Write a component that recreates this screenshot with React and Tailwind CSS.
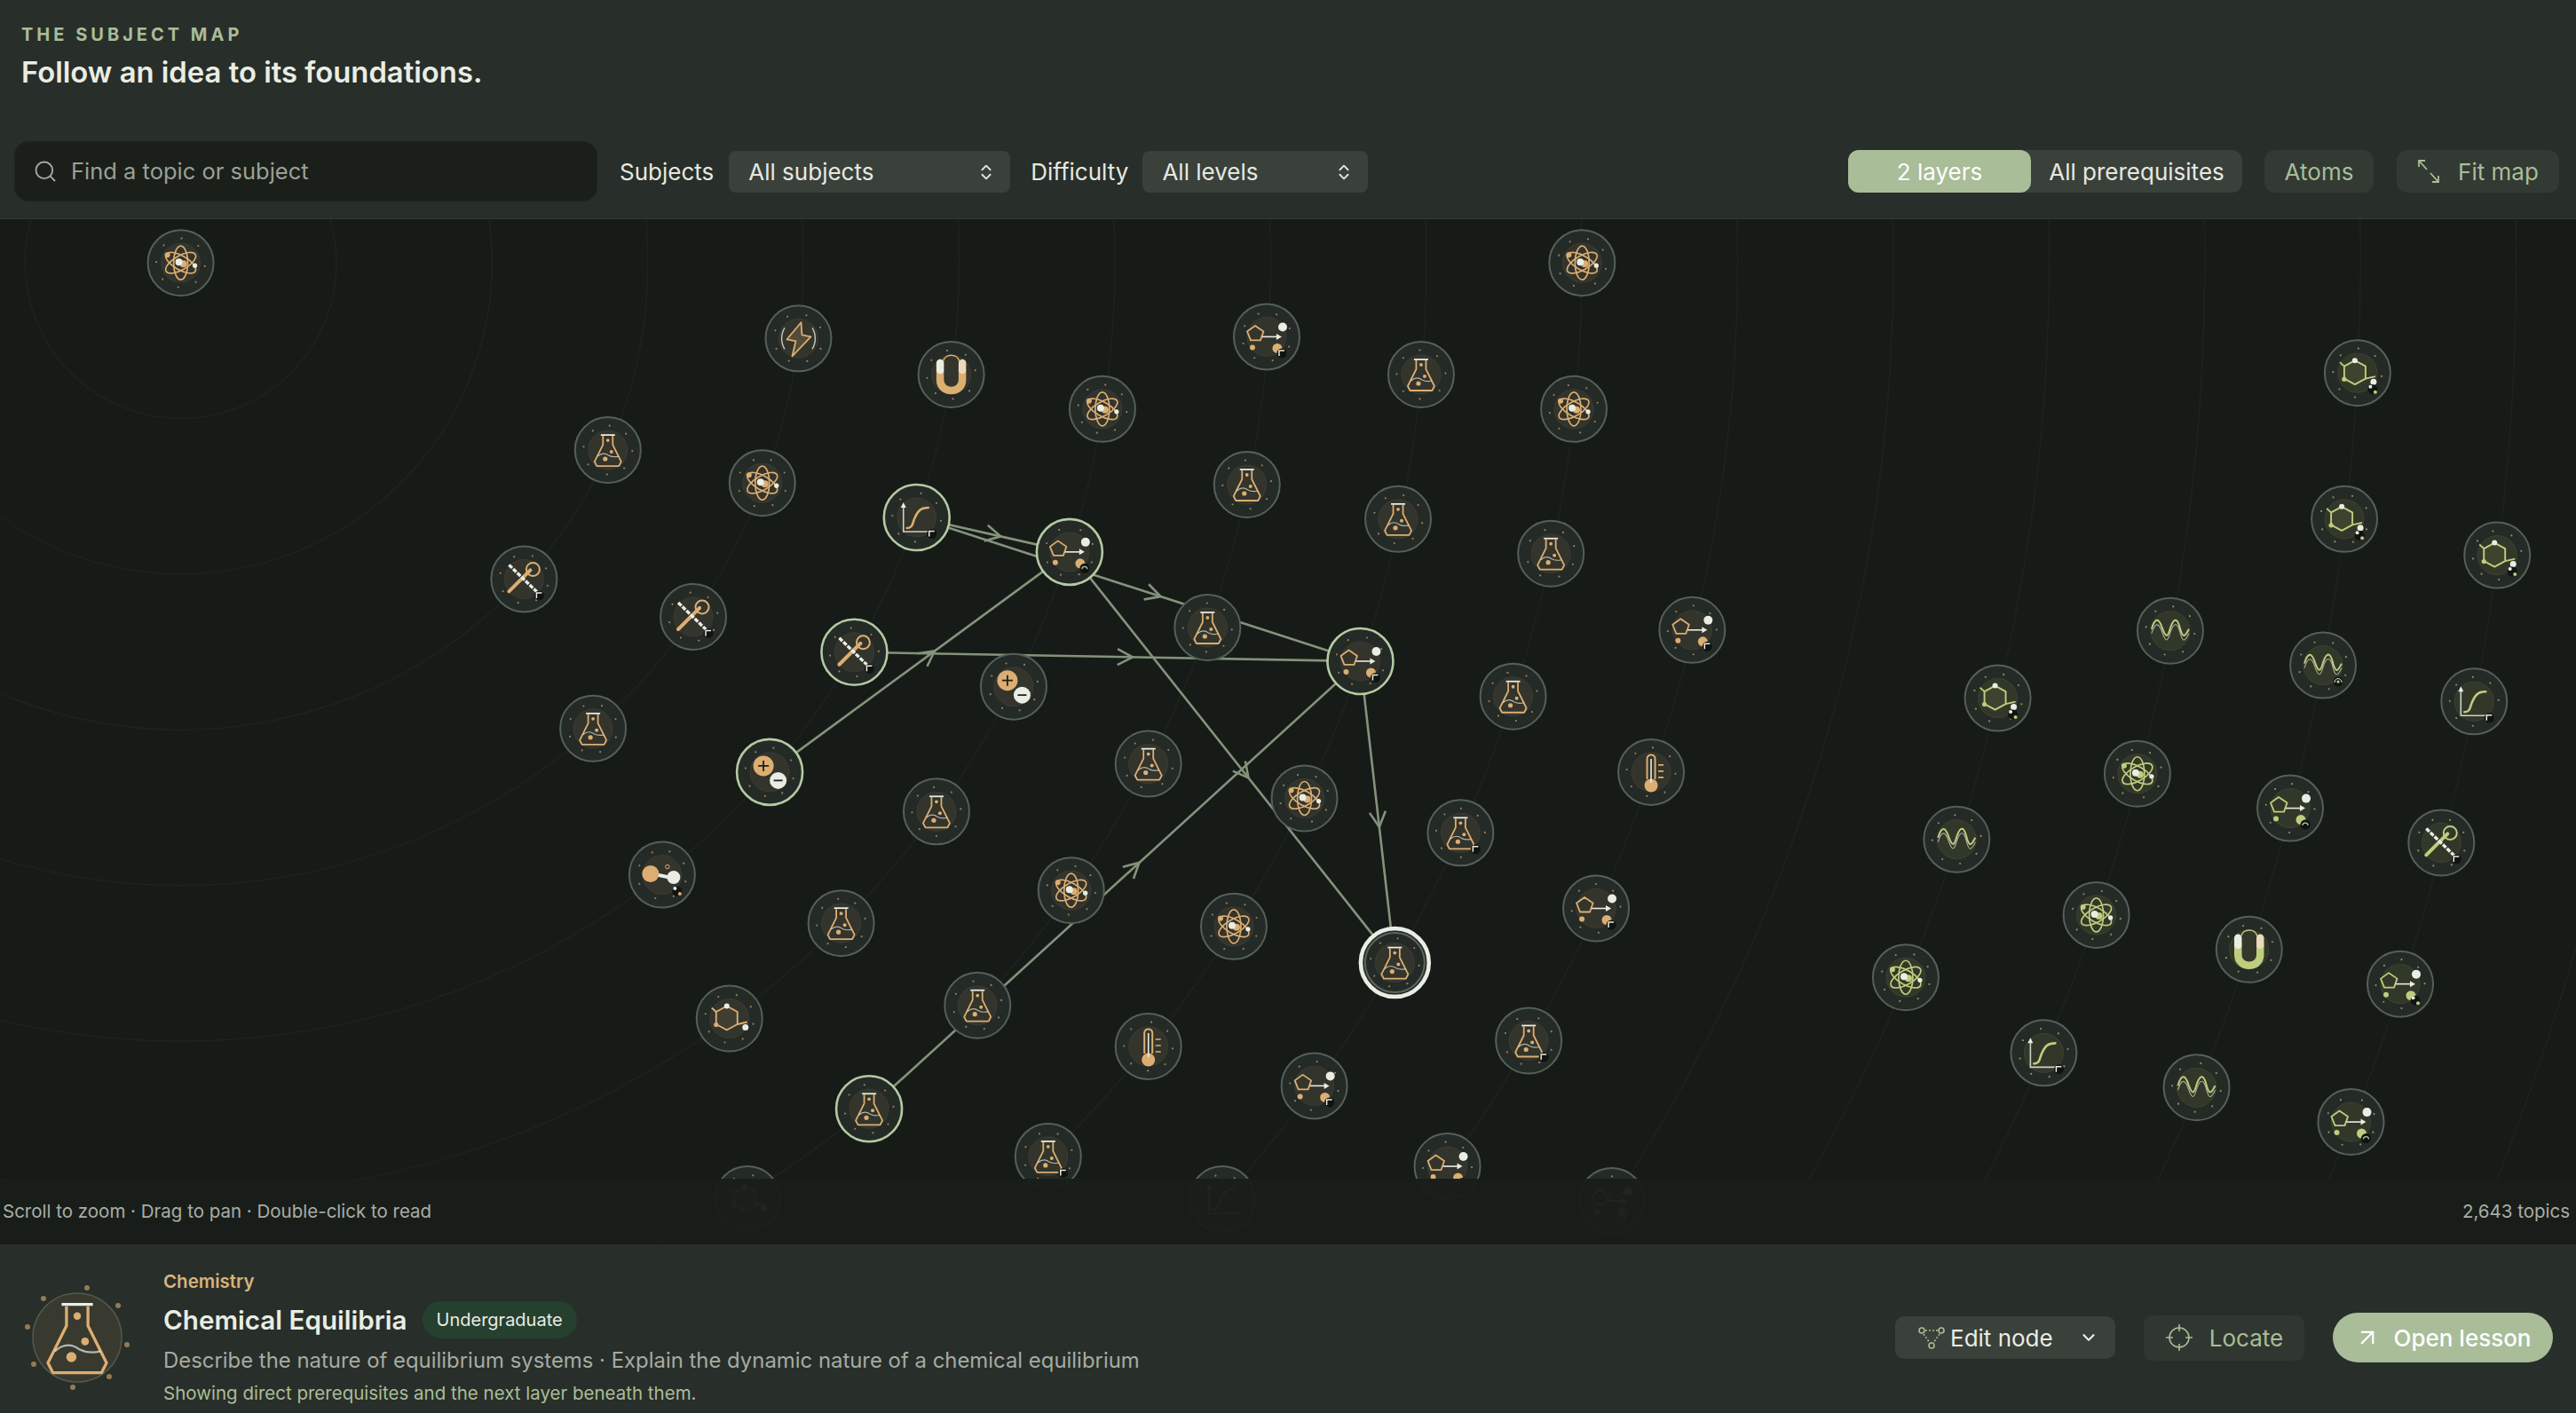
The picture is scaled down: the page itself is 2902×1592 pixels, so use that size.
import React from 'react';
import { ArrowUpRight, ChevronDown, ChevronsUpDown, Search } from 'lucide-react';

const TAN = '#dcae72';
const GREEN = '#bfcd7e';
const WHITE = '#e9ede3';
const SCALE = 1.8508;
const RING_CENTER = [203.6, 296];

// positions are in the 1568-wide sketch coordinates, scaled at render time
const chemistry = [
  [110, 160, 'atom'], [486, 206, 'bolt'], [579, 228, 'magnet'], [671, 249, 'atom'], [771, 205, 'reaction', 'corner'],
  [865, 228, 'flask'], [963, 160, 'atom'], [958, 249, 'atom'], [370, 274, 'flask'], [464, 294, 'atom'],
  [759, 295, 'flask'], [851, 316, 'flask'], [944, 337, 'flask'], [1030, 383.5, 'reaction', 'corner'], [319, 352.5, 'tools', 'corner'],
  [422, 375.5, 'tools', 'corner'], [558, 315, 'curve', 'corner', true], [651, 336, 'reaction', 'swirl', true], [520, 397, 'tools', 'corner', true],
  [468.5, 470, 'plusminus', null, true], [617, 418, 'plusminus'], [735, 382, 'flask'], [828, 402.5, 'reaction', 'corner', true], [921, 424, 'flask'],
  [1005, 470, 'thermo'], [361, 443.5, 'flask'], [570, 494, 'flask'], [699, 465, 'flask'], [794, 486, 'atom'],
  [889, 507, 'flask', 'corner'], [403, 532.5, 'dumbbell', 'bond'], [512, 562, 'flask'], [652, 542, 'atom'], [751, 564, 'atom'],
  [971.5, 553, 'reaction', 'corner'], [444, 620, 'hexagon'], [595, 612, 'flask'], [699, 637, 'thermo'], [930.5, 633.5, 'flask', 'corner'],
  [529, 675, 'flask', null, true], [800, 661, 'reaction', 'corner'], [638, 704, 'flask', 'corner'], [881, 710, 'reaction', 'corner'],
  [455, 730, 'hexagon'], [744, 730, 'curve', 'corner'], [981, 731, 'reaction', 'corner'],
];

const physics = [
  [1435, 227, 'hexagon', 'bond'], [1427, 316, 'hexagon', 'bond'], [1520, 338, 'hexagon', 'bond'], [1321, 384, 'wave'], [1414, 405, 'wave', 'target'],
  [1506, 427, 'curve', 'corner'], [1216, 425, 'hexagon', 'bond'], [1301, 471, 'atom'], [1394, 492, 'reaction', 'swirl'], [1486, 513, 'tools', 'corner'],
  [1191, 511, 'wave'], [1276, 557, 'atom'], [1369, 578, 'magnet'], [1461, 599, 'reaction', 'bond'], [1160, 595, 'atom'],
  [1244, 641, 'curve', 'corner'], [1337, 662, 'wave'], [1431, 683, 'reaction', 'swirl'],
];

const edges = [
  [[558, 315], [651, 336]],
  [[558, 315], [828, 402.5]],
  [[520, 397], [828, 402.5]],
  [[468.5, 470], [651, 336]],
  [[651, 336], [849, 586]],
  [[828, 402.5], [849, 586]],
  [[529, 675], [828, 402.5]],
];

const DOT_ANGLES = [8, 52, 96, 138, 182, 226, 272, 316];

const Flask = ({ c, sw = 1.8 }) => (
  <g fill="none">
    <path d="M-5.5 -16 V-6 L-15 13 L-12.5 18 H12.5 L15 13 L5.5 -6 V-16" stroke={c} strokeWidth={sw} strokeLinejoin="round" />
    <path d="M-8 -17 H8" stroke={WHITE} strokeWidth={sw} />
    <path d="M-11.5 7 C-7 3 -3 3 1 6 C5 8 8 8 12 7" stroke={WHITE} strokeOpacity=".7" strokeWidth={sw * 0.65} />
    <circle cx="0" cy="-11" r="1.9" fill={c} />
    <circle cx="4" cy="2" r="2" fill={c} />
    <circle cx="-3" cy="10" r="2.6" fill={c} />
  </g>
);

const Atom = ({ c }) => (
  <g fill="none">
    <ellipse rx="19" ry="8" transform="rotate(30)" stroke={c} strokeWidth="1.7" />
    <ellipse rx="19" ry="8" transform="rotate(90)" stroke={c} strokeWidth="1.7" />
    <ellipse rx="19" ry="8" transform="rotate(150)" stroke={c} strokeWidth="1.7" />
    <circle cx="-15" cy="-9" r="3" fill={c} />
    <circle cx="3" cy="1" r="4" fill={c} />
    <circle cx="-2" cy="-1" r="4" fill={WHITE} />
    <circle cx="16" cy="3" r="2.6" fill={WHITE} />
  </g>
);

const Reaction = ({ c }) => (
  <g>
    <path d="M-13 -12.5 L-3.5 -6 L-7 4 L-18 4 L-22 -6 Z" fill="none" stroke={c} strokeWidth="1.8" strokeLinejoin="round" />
    <path d="M-5 0 H13" stroke={WHITE} strokeWidth="1.6" />
    <path d="M11 -3.5 L17 0 L11 3.5 Z" fill={WHITE} />
    <circle cx="18" cy="-11" r="5" fill={WHITE} />
    <circle cx="12" cy="13" r="5.5" fill={c} />
    <circle cx="-16" cy="12" r="3" fill={c} />
  </g>
);

const Curve = ({ c }) => (
  <g fill="none">
    <path d="M-15 -15 V16 H18" stroke={WHITE} strokeOpacity=".85" strokeWidth="1.6" />
    <path d="M-18 -11 L-15 -17 L-12 -11 Z" fill={WHITE} />
    <path d="M-11 12 C-4 12 -5 6 -2 0 C1 -7 4 -11 13 -11" stroke={c} strokeWidth="2.6" strokeLinecap="round" />
  </g>
);

const Tools = ({ c }) => (
  <g fill="none">
    <path d="M-17 14 L7 -10" stroke={c} strokeWidth="4" strokeLinecap="round" />
    <circle cx="10" cy="-11" r="7.5" stroke={c} strokeWidth="2" />
    <path d="M-17 -16 L15 15" stroke={WHITE} strokeWidth="3.4" strokeDasharray="5 1.5" />
  </g>
);

const PlusMinus = ({ c }) => (
  <g>
    <circle cx="-7" cy="-7" r="11.5" fill={c} />
    <path d="M-13 -7 H-1 M-7 -13 V-1" stroke="#1c211d" strokeWidth="1.8" />
    <circle cx="9.5" cy="9.5" r="9.5" fill={WHITE} />
    <path d="M4.5 9.5 H14.5" stroke="#1c211d" strokeWidth="1.8" />
  </g>
);

const Bolt = ({ c }) => (
  <g fill="none">
    <path d="M3 -18 L-13 1 L-3 3 L-7 20 L14 -2 L4 -4 Z" fill={c} fillOpacity=".2" stroke={c} strokeWidth="1.8" strokeLinejoin="round" />
    <path d="M-15.5 -12 C-20 -5 -20 5 -15.5 12" stroke={WHITE} strokeOpacity=".8" strokeWidth="1.4" />
    <path d="M15.5 -12 C20 -5 20 5 15.5 12" stroke={WHITE} strokeOpacity=".8" strokeWidth="1.4" />
  </g>
);

const Magnet = ({ c }) => (
  <g fill="none">
    <path d="M-12.5 -5 V6 C-12.5 22 12.5 22 12.5 6 V-5" stroke={c} strokeWidth="8.5" />
    <path d="M-12.5 -5 V-13" stroke={WHITE} strokeWidth="8.5" strokeLinecap="round" />
    <path d="M12.5 -5 V-13" stroke="#ecd9b8" strokeWidth="8.5" strokeLinecap="round" />
    <path d="M-9 -15 C-7 -24 7 -24 9 -15" stroke={c} strokeWidth="1.4" />
  </g>
);

const Hexagon = ({ c }) => (
  <g fill="none">
    <path d="M-3 -14 L9 -7.5 L9 6.5 L-3 13 L-15 6.5 L-15 -7.5 Z" fill={c} fillOpacity=".08" stroke={c} strokeWidth="1.9" strokeLinejoin="round" />
    <path d="M-15 -7.5 L-20 -12 M9 6.5 L20 4" stroke={c} strokeWidth="1.9" />
    <circle cx="-3" cy="-14" r="3" fill={WHITE} />
    <circle cx="-15" cy="7" r="2.6" fill={c} />
    <circle cx="18" cy="10" r="3.5" fill={WHITE} />
  </g>
);

const Dumbbell = ({ c }) => (
  <g>
    <path d="M-6 0 L8 3" stroke={WHITE} strokeWidth="4" />
    <circle cx="-13" cy="-1" r="9.5" fill={c} />
    <circle cx="13" cy="3" r="7.5" fill={WHITE} />
    <circle cx="6" cy="-9" r="2.2" fill="none" stroke={c} strokeWidth="1" />
  </g>
);

const Thermo = ({ c }) => (
  <g fill="none">
    <path d="M-4.5 8 V-15 C-4.5 -21 4.5 -21 4.5 -15 V8" stroke={c} strokeWidth="2" />
    <circle cx="0" cy="15" r="7.5" fill={c} />
    <path d="M0 12 V-15" stroke={WHITE} strokeWidth="1.6" />
    <path d="M8 -8 H14 M8 -1 H14 M8 6 H14" stroke={c} strokeWidth="1.6" />
  </g>
);

const Wave = ({ c }) => (
  <g fill="none">
    <path d="M-21 -2 C-17 -15 -13 -15 -9 -3 C-5 8 -3 8 0 -3 C4 -15 8 -15 11 -3 C14 8 16 8 21 -2" stroke={c} strokeWidth="2" />
    <path d="M-21 3 C-17 -10 -13 -10 -9 2 C-5 13 -3 13 0 2 C4 -10 8 -10 11 2 C14 13 16 13 21 3" stroke={WHITE} strokeOpacity=".65" strokeWidth="1.1" />
  </g>
);

const ICONS = {
  flask: Flask, atom: Atom, reaction: Reaction, curve: Curve, tools: Tools, plusminus: PlusMinus,
  bolt: Bolt, magnet: Magnet, hexagon: Hexagon, dumbbell: Dumbbell, thermo: Thermo, wave: Wave,
};

const Badge = ({ type, c }) => {
  if (!type) return null;
  return (
    <g transform="translate(17 18.5)">
      <circle r="5.5" fill="#101411" />
      {type === 'corner' && <path d="M-3 3 V-3 H3" fill="none" stroke={WHITE} strokeWidth="1.5" />}
      {type === 'swirl' && <path d="M-3 1 C-3 -3 3 -3 3 1" fill="none" stroke={WHITE} strokeOpacity=".8" strokeWidth="1.3" />}
      {type === 'bond' && (
        <g>
          <circle cx="-2.5" cy="-3" r="2" fill={WHITE} />
          <circle cx="3" cy="3" r="2" fill={c} />
        </g>
      )}
      {type === 'target' && (
        <g>
          <circle r="1.6" fill={c} />
          <path d="M-4 1 C-4 -5 4 -5 4 1" fill="none" stroke={WHITE} strokeWidth="1" />
        </g>
      )}
    </g>
  );
};

const Node = ({ x, y, icon, badge, active, target, color, index }) => {
  const Icon = ICONS[icon];
  return (
    <g transform={`translate(${x * SCALE} ${y * SCALE})`}>
      <circle r="37" fill="#242a26" stroke={active ? '#b4caa3' : '#556058'} strokeWidth={active ? 2.6 : 2} />
      {target && <circle r="38.5" fill="none" stroke={WHITE} strokeWidth="4.5" />}
      {target && <circle r="33.5" fill="none" stroke="#5d665e" strokeWidth="2" />}
      <circle r="22" fill={color === TAN ? '#33342c' : '#323829'} stroke={color === TAN ? '#3c3c32' : '#3c4332'} strokeWidth="1" />
      {DOT_ANGLES.map((a) => {
        const rad = ((a + index * 17) * Math.PI) / 180;
        return <circle key={a} cx={Math.cos(rad) * 27.5} cy={Math.sin(rad) * 27.5} r="1.1" fill={color} fillOpacity=".65" />;
      })}
      <Icon c={color} />
      <Badge type={badge} c={color} />
    </g>
  );
};

const Edge = ({ from, to }) => {
  const x1 = from[0] * SCALE;
  const y1 = from[1] * SCALE;
  const x2 = to[0] * SCALE;
  const y2 = to[1] * SCALE;
  const mx = x1 + (x2 - x1) * 0.55;
  const my = y1 + (y2 - y1) * 0.55;
  const angle = (Math.atan2(y2 - y1, x2 - x1) * 180) / Math.PI;
  return (
    <g stroke="#84937c" strokeWidth="2.6" fill="none">
      <line x1={x1} y1={y1} x2={x2} y2={y2} />
      <path d="M-17 -9 L0 0 L-17 9" transform={`translate(${mx} ${my}) rotate(${angle})`} />
    </g>
  );
};

const SubjectGraph = () => (
  <svg className="absolute inset-0 w-full h-full" viewBox="0 247 2902 1155">
    {Array.from({ length: 24 }, (_, i) => (
      <circle key={i} cx={RING_CENTER[0]} cy={RING_CENTER[1]} r={(i + 1) * 175.4} fill="none" stroke="#ffffff" strokeOpacity=".035" strokeWidth="1.4" />
    ))}
    {edges.map((e, i) => <Edge key={i} from={e[0]} to={e[1]} />)}
    {chemistry.map((n, i) => (
      <Node key={i} index={i} x={n[0]} y={n[1]} icon={n[2]} badge={n[3]} active={n[4]} color={TAN} />
    ))}
    {physics.map((n, i) => (
      <Node key={i} index={i} x={n[0]} y={n[1]} icon={n[2]} badge={n[3]} color={GREEN} />
    ))}
    <Node index={3} x={849} y={586} icon="flask" target color={TAN} />
  </svg>
);

const FitIcon = () => (
  <svg width="26" height="28" viewBox="0 0 26 28" fill="none" stroke="#a8bd98" strokeWidth="1.8">
    <path d="M2 9 V2 H9 M2 2 L11 12" />
    <path d="M24 19 V26 H17 M24 26 L15 16" />
  </svg>
);

const CrosshairIcon = () => (
  <svg width="32" height="32" viewBox="0 0 32 32" fill="none" stroke="#a8bd98" strokeWidth="1.6">
    <circle cx="16" cy="16" r="11" />
    <path d="M16 1 V9 M16 23 V31 M1 16 H9 M23 16 H31" />
  </svg>
);

const EditNodeIcon = () => (
  <svg width="30" height="26" viewBox="0 0 30 26" fill="none" stroke="#a8bd98" strokeWidth="1.6">
    <circle cx="4" cy="5" r="3" />
    <circle cx="26" cy="5" r="3" />
    <circle cx="15" cy="22" r="3" />
    <path d="M8 5 H22 M6 9 L13 19 M24 9 L17 19" strokeDasharray="2 2" />
  </svg>
);

const FooterFlask = () => {
  const dots = [[98, 1451], [49, 1463], [133, 1471], [31, 1495], [143, 1515], [38, 1537], [123, 1551], [82, 1563]];
  return (
    <svg className="w-[160px] h-[130px] shrink-0" viewBox="10 1442 160 130">
      <circle cx="87" cy="1507" r="50" fill="#383a30" stroke="#55584a" strokeWidth="1.5" />
      {dots.map(([x, y]) => <circle key={x} cx={x} cy={y} r="3" fill={TAN} fillOpacity=".6" />)}
      <g transform="translate(87 1507) scale(2.2)">
        <Flask c={TAN} sw={1.5} />
      </g>
    </svg>
  );
};

const SelectBox = ({ label, width }) => (
  <button className={`h-[47px] ${width} flex items-center justify-between pl-[22px] pr-[16px] pt-[1px] bg-[#3a403a] rounded-[8px] text-[26px] text-[#e6e8e0]`}>
    {label}
    <ChevronsUpDown size={22} color="#e6e8e0" />
  </button>
);

export default function App() {
  return (
    <div className="w-[2902px] h-[1592px] flex flex-col overflow-hidden bg-[#161b17] [font-family:Inter,sans-serif]">
      <header className="h-[247px] shrink-0 bg-[#282e29] border-b border-[#323832]">
        <div className="pl-6 pt-[27px]">
          <div className="text-[20px] leading-6 font-bold tracking-[0.2em] text-[#a8bd98]">THE SUBJECT MAP</div>
          <h1 className="mt-[9px] text-[32.8px] leading-[42px] font-semibold text-[#e9ede3]">Follow an idea to its foundations.</h1>
        </div>
        <div className="mt-[57px] flex items-center pl-4 pr-[19px]">
          <div className="w-[657px] h-[68px] flex items-center gap-[15px] pl-[20px] bg-[#1a1f1a] rounded-[16px] border border-[#20251f]">
            <Search size={28} color="#a5aba2" strokeWidth={1.6} />
            <span className="text-[25.5px] text-[#9aa096]">Find a topic or subject</span>
          </div>
          <span className="ml-[25px] mr-[17px] text-[26px] text-[#e6e8e0]">Subjects</span>
          <SelectBox label="All subjects" width="w-[317px]" />
          <span className="ml-[23px] mr-[16px] text-[26px] text-[#e6e8e0]">Difficulty</span>
          <SelectBox label="All levels" width="w-[254px]" />
          <div className="ml-auto flex items-center">
            <div className="flex h-12 rounded-[12px] bg-[#3a403a]">
              <button className="w-[206px] rounded-[12px] bg-[#a8bd98] text-[26px] text-white">2 layers</button>
              <button className="w-[238px] text-[26px] text-[#e6e8e0]">All prerequisites</button>
            </div>
            <button className="ml-[25px] w-[123px] h-12 rounded-[12px] bg-[#333a33] text-[26px] text-[#a8bd98]">Atoms</button>
            <button className="ml-[26px] w-[183px] h-12 flex items-center justify-center gap-[20px] rounded-[12px] bg-[#333a33] text-[26px] text-[#a8bd98]">
              <FitIcon />
              Fit map
            </button>
          </div>
        </div>
      </header>

      <main className="relative flex-1 overflow-hidden">
        <SubjectGraph />
        <div className="absolute bottom-0 inset-x-0 h-[74px] flex items-center justify-between pl-[3px] pr-[7px] bg-[#191e1a]/[0.97] text-[20.5px] text-[#a8ada5]">
          <span>Scroll to zoom · Drag to pan · Double-click to read</span>
          <span>2,643 topics</span>
        </div>
      </main>

      <footer className="h-[190px] shrink-0 flex items-center justify-between pl-[10px] pr-[26px] pt-5 bg-[#282e29]">
        <div className="flex items-center gap-[14px]">
          <FooterFlask />
          <div className="flex flex-col">
            <span className="text-[20.5px] leading-[28px] font-semibold text-[#d8b27a]">Chemistry</span>
            <div className="mt-[8px] flex items-center gap-[17px]">
              <span className="text-[29.6px] leading-[42px] font-semibold text-[#e9ede3]">Chemical Equilibria</span>
              <span className="h-[42px] px-[16px] flex items-center rounded-full bg-[#26402f] text-[20px] text-[#e8ebe3]">Undergraduate</span>
            </div>
            <p className="mt-[7px] text-[23.9px] leading-[36px] text-[#a5aba2]">Describe the nature of equilibrium systems · Explain the dynamic nature of a chemical equilibrium</p>
            <p className="mt-[5px] text-[20.5px] leading-[28px] text-[#a8bd98]">Showing direct prerequisites and the next layer beneath them.</p>
          </div>
        </div>
        <div className="flex items-center">
          <button className="w-[248px] h-12 flex items-center pl-[26px] pr-[19px] rounded-[10px] bg-[#3a403a] text-[26px] text-[#e9ede3]">
            <EditNodeIcon />
            <span className="ml-[6px]">Edit node</span>
            <ChevronDown className="ml-auto" size={22} strokeWidth={2.4} color="#e9ede3" />
          </button>
          <button className="ml-[32px] w-[181px] h-[51px] flex items-center justify-center gap-[18px] rounded-[10px] bg-[#303730] text-[26px] text-[#a8bd98]">
            <CrosshairIcon />
            Locate
          </button>
          <button className="ml-[32px] w-[248px] h-[56px] flex items-center justify-center gap-[14px] rounded-full bg-[#a8bd98] text-[26px] font-medium text-white">
            <ArrowUpRight size={30} strokeWidth={1.8} />
            Open lesson
          </button>
        </div>
      </footer>
    </div>
  );
}
